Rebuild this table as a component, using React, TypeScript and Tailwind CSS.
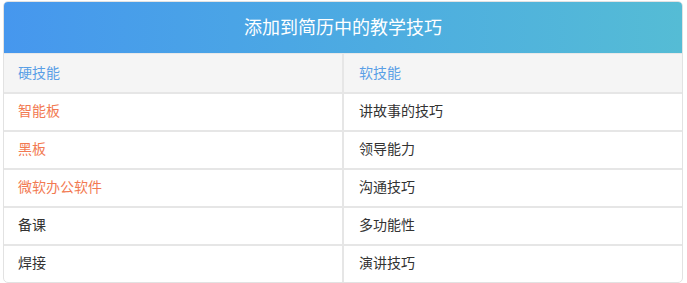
const rows: { hard: string; soft: string; hot: boolean }[] = [
  { hard: "智能板", soft: "讲故事的技巧", hot: true },
  { hard: "黑板", soft: "领导能力", hot: true },
  { hard: "微软办公软件", soft: "沟通技巧", hot: true },
  { hard: "备课", soft: "多功能性", hot: false },
  { hard: "焊接", soft: "演讲技巧", hot: false },
];

export default function App() {
  return (
    <div
      className="bg-white pl-[3px] pr-[4px] pt-[1px]"
      style={{ fontFamily: '"Noto Sans CJK SC", "Noto Sans", sans-serif' }}
    >
      <div className="w-[680px] overflow-hidden rounded-[5px] border border-[#e2e2e2]">
        <div className="flex h-[51px] items-center justify-center bg-gradient-to-r from-[#4697ee] to-[#55bcd5] pb-[2px] text-[18px] text-white">
          添加到简历中的教学技巧
        </div>
        <div className="grid grid-cols-[340px_1fr] border-t border-[#e8e8e8] bg-[#f5f5f5] text-[14px] text-[#5a9fe6]">
          <div className="flex h-[38px] items-center border-r-2 border-[#e6e6e6] pb-[2px] pl-[14px]">
            硬技能
          </div>
          <div className="flex h-[38px] items-center pb-[2px] pl-[15px]">软技能</div>
        </div>
        {rows.map((r) => (
          <div
            key={r.hard}
            className="grid grid-cols-[340px_1fr] border-t-2 border-[#e6e6e6] text-[14px] text-[#333]"
          >
            <div
              className={`flex h-[36px] items-center border-r-2 border-[#e6e6e6] pb-[3px] pl-[14px] ${
                r.hot ? "text-[#f27a52]" : ""
              }`}
            >
              {r.hard}
            </div>
            <div className="flex h-[36px] items-center pb-[3px] pl-[15px]">{r.soft}</div>
          </div>
        ))}
      </div>
    </div>
  );
}
